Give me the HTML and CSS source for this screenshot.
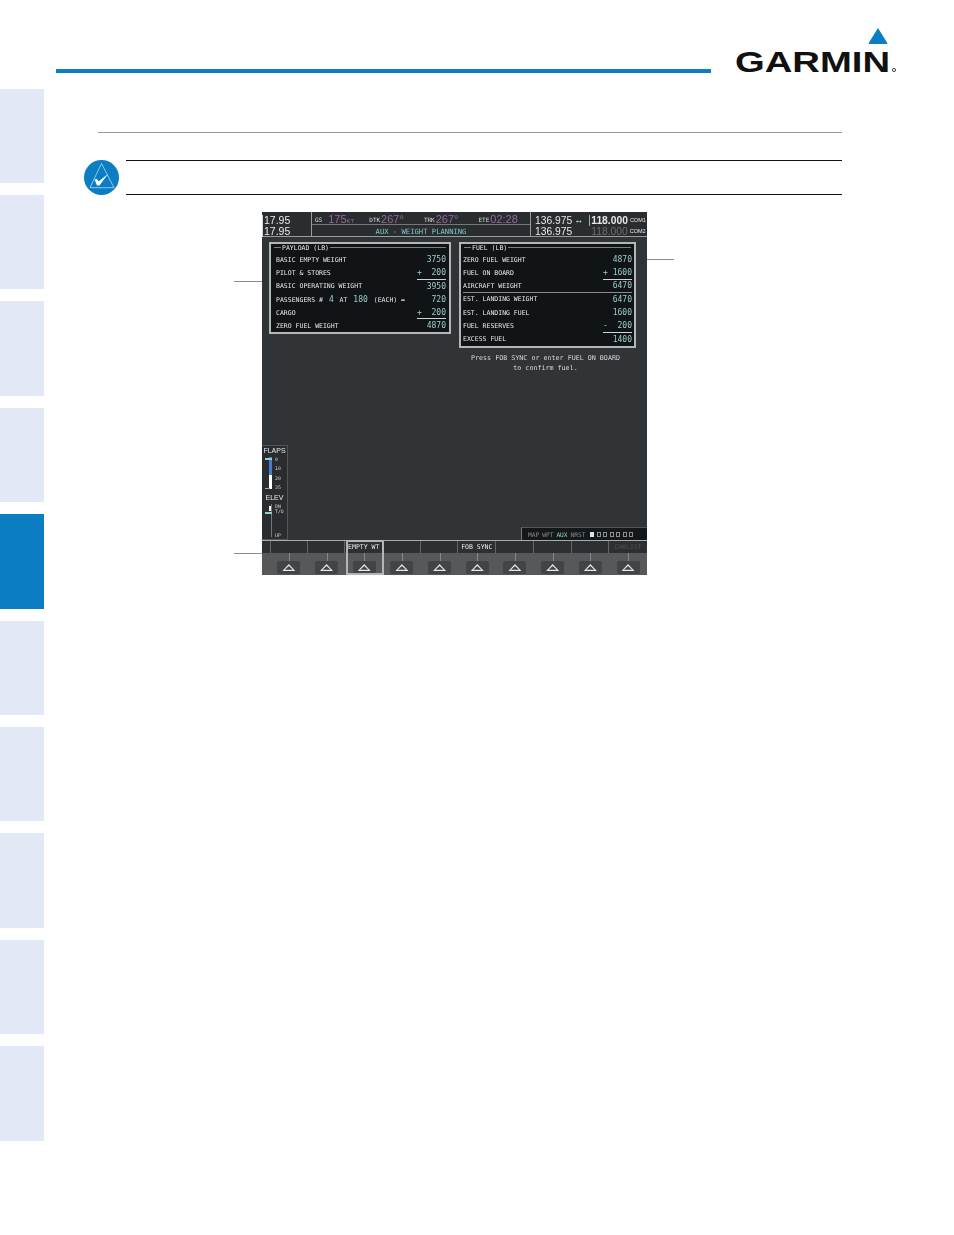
FILE: index.html
```html
<!DOCTYPE html>
<html lang="en">
<head>
<meta charset="utf-8">
<title>AUX - Weight Planning</title>
<link rel="stylesheet" href="styles.css">
</head>
<body>
<div class="page">
  <nav class="tabs">
    <div class="tab"></div><div class="tab"></div><div class="tab"></div><div class="tab"></div>
    <div class="tab active"></div>
    <div class="tab"></div><div class="tab"></div><div class="tab"></div><div class="tab"></div><div class="tab"></div>
  </nav>
  <div class="main">
    <header class="head">
      <div class="head-rule"></div>
      <svg class="logo" width="164" height="50" viewBox="0 0 164 50">
        <path d="M143 1 L134 15.500 Q133 17 135 17 L151 17 Q153 17 152 15.500 Z" fill="#0b7dc2"/>
        <text x="0" y="44.500" font-family="'Liberation Sans',sans-serif" font-weight="700" font-size="30" textLength="155" lengthAdjust="spacingAndGlyphs" fill="#111">GARMIN</text>
        <circle cx="159" cy="43" r="1.600" fill="none" stroke="#444" stroke-width="1"/>
      </svg>
    </header>
    <div class="section-rule"></div>
    <div class="note">
      <svg class="note-icon" width="36" height="36" viewBox="0 0 36 36">
        <circle cx="17.500" cy="17.500" r="17.500" fill="#0b7dc2"/>
        <path d="M17.500 3.500 L6 27.700 L30 27.700 Z" fill="none" stroke="#cfe6f5" stroke-width="0.700"/>
        <path d="M10.500 19.500 L13 19 L14.500 21.500 L24 14 L15.500 25.500 L13 25.500 Z" fill="#fff"/>
      </svg>
      <div class="note-body"></div>
    </div>
    <figure class="figure">
      <div class="leader leader-a"></div>
      <div class="leader leader-b"></div>
      <div class="leader leader-c"></div>
      <div class="screen">
        <div class="topbar">
          <div class="tb-nav"><span>17.95</span><span>17.95</span></div>
          <div class="tb-mid">
            <div class="tb-data">
              <span class="lbl">GS</span><span class="mag gs">175<small>KT</small></span>
              <span class="lbl dtk">DTK</span><span class="mag">267°</span>
              <span class="lbl trk">TRK</span><span class="mag">267°</span>
              <span class="lbl ete">ETE</span><span class="mag">02:28</span>
            </div>
            <div class="tb-title">AUX - WEIGHT PLANNING</div>
          </div>
          <div class="tb-com">
            <div class="com-row"><span>136.975</span><span class="swap">↔</span><span class="com-box">118.000</span><small>COM1</small></div>
            <div class="com-row"><span>136.975</span><span class="com-dim">118.000</span><small>COM2</small></div>
          </div>
        </div>
        <div class="panels">
          <section class="panel payload">
            <h3 class="panel-title">PAYLOAD (LB)</h3>
            <div class="row"><span>BASIC EMPTY WEIGHT</span><b>3750</b></div>
            <div class="row"><span>PILOT &amp; STORES</span><b class="add">+&nbsp;&nbsp;200</b></div>
            <div class="row"><span>BASIC OPERATING WEIGHT</span><b>3950</b></div>
            <div class="row"><span>PASSENGERS # <b>4</b> AT <b>180</b> (EACH) =</span><b>720</b></div>
            <div class="row"><span>CARGO</span><b class="add">+&nbsp;&nbsp;200</b></div>
            <div class="row"><span>ZERO FUEL WEIGHT</span><b>4870</b></div>
          </section>
          <div class="fuel-col">
            <section class="panel fuel">
              <h3 class="panel-title">FUEL (LB)</h3>
              <div class="row"><span>ZERO FUEL WEIGHT</span><b>4870</b></div>
              <div class="row"><span>FUEL ON BOARD</span><b class="add">+&nbsp;1600</b></div>
              <div class="row split"><span>AIRCRAFT WEIGHT</span><b>6470</b></div>
              <div class="row"><span>EST. LANDING WEIGHT</span><b>6470</b></div>
              <div class="row"><span>EST. LANDING FUEL</span><b>1600</b></div>
              <div class="row"><span>FUEL RESERVES</span><b class="add">-&nbsp;&nbsp;200</b></div>
              <div class="row"><span>EXCESS FUEL</span><b>1400</b></div>
            </section>
            <p class="prompt">Press FOB SYNC or enter FUEL ON BOARD<br>to confirm fuel.</p>
          </div>
        </div>
        <div class="lower">
          <div class="gauge">
            <div class="g-title">FLAPS</div>
            <div class="g-scale flaps">
              <div class="g-bar"></div>
              <div class="g-ticks"><span>0</span><span>10</span><span>20</span><span>35</span></div>
            </div>
            <div class="g-title">ELEV</div>
            <div class="g-scale elev">
              <div class="g-track"></div>
              <div class="g-ticks"><span>DN<br>T/O</span><span>UP</span></div>
            </div>
          </div>
          <div class="modes">
            <span>MAP</span><span>WPT</span><span class="on">AUX</span><span>NRST</span>
            <div class="dots"><i class="fill"></i><i></i><i></i><i></i><i></i><i></i><i></i></div>
          </div>
        </div>
        <div class="softkeys">
          <div class="labels">
            <span></span><span></span><span>EMPTY WT</span><span></span><span></span><span>FOB SYNC</span><span></span><span></span><span></span><span class="dim">CHKLIST</span>
          </div>
          <div class="keys">
            <div class="key"><em></em></div><div class="key"><em></em></div><div class="key"><em></em></div><div class="key"><em></em></div><div class="key"><em></em></div>
            <div class="key"><em></em></div><div class="key"><em></em></div><div class="key"><em></em></div><div class="key"><em></em></div><div class="key"><em></em></div>
          </div>
        </div>
        <div class="hilite"></div>
      </div>
    </figure>
  </div>
</div>
</body>
</html>
```

FILE: styles.css
```css
* { box-sizing: border-box; }
html, body { margin: 0; padding: 0; background: #fff; }
body { font-family: "Liberation Sans", Arial, sans-serif; }
.page { display: flex; width: 954px; height: 1235px; overflow: hidden; }

.tabs { width: 44px; flex: none; padding-top: 88.700px; display: flex; flex-direction: column; gap: 12px; }
.tab { height: 94.400px; background: #e2e8f6; }
.tab.active { background: #0b7dc2; }

.main { flex: 1; min-width: 0; }
.head { height: 76px; padding: 27px 0 0 12px; display: flex; align-items: flex-start; position: relative; }
.head-rule { position: absolute; left: 12px; top: 69px; width: 655px; height: 4px; background: #0b7dc2; }
.logo { margin-left: 679px; display: block; }

.section-rule { margin: 56px 112px 0 54px; height: 1px; background: #999; }
.note { margin: 27px 112px 0 40px; display: flex; height: 36px; }
.note-icon { flex: none; display: block; }
.note-body { flex: 1; margin-left: 6px; height: 35px; border-top: 1px solid #111; border-bottom: 1px solid #111; }

.figure { margin: 16px 0 0 218px; width: 385px; position: relative; }
.leader { position: absolute; height: 1px; background: #8d8d8d; }
.leader-a { left: -28px; top: 69px; width: 36px; }
.leader-b { left: -28px; top: 341px; width: 112px; }
.leader-c { left: 373px; top: 47px; width: 39px; }

.screen { width: 385px; height: 363px; background: #303437; color: #e6e8e8; position: relative; overflow: hidden; font-family: "DejaVu Sans Mono", monospace; font-size: 6.500px; filter: blur(0.3px); }

.topbar { height: 25px; display: flex; border-bottom: 1px solid #9a9c9c; background: #2a2d30; font-family: "Liberation Sans", sans-serif; }
.tb-nav { width: 50px; flex: none; border-right: 1px solid #9a9c9c; display: flex; flex-direction: column; font-size: 10.500px; line-height: 11px; padding-top: 3px; color: #e8e8e8; }
.tb-nav span { padding-left: 1px; border-left: 1px solid #cfcfcf; }
.tb-mid { width: 218px; flex: none; display: flex; flex-direction: column; }
.tb-data { height: 13px; border-bottom: 1px solid #777; display: flex; align-items: center; padding: 2px 0 0 3px; white-space: nowrap; }
.lbl { font-size: 6px; color: #dcdcdc; font-family: "DejaVu Sans Mono", monospace; }
.mag { font-size: 11px; color: #96689e; margin-left: 1px; }
.mag small { font-size: 6px; }
.gs { margin-left: 6px; }
.dtk { margin-left: 15px; }
.trk { margin-left: 20px; }
.ete { margin-left: 20px; }
.tb-title { color: #7fc9c0; font-family: "DejaVu Sans Mono", monospace; font-size: 7.200px; line-height: 11px; padding-top: 1px; text-align: center; }
.tb-com { flex: 1; min-width: 0; border-left: 1px solid #9a9c9c; padding: 3px 0 0 4px; font-size: 10.300px; line-height: 11px; color: #e8e8e8; }
.com-row { display: flex; align-items: center; white-space: nowrap; }
.com-row small { font-size: 5.500px; margin-left: 2px; }
.swap { font-size: 9px; color: #cfe; margin-left: 2px; width: 15px; }
.com-box { border-left: 1px solid #aaa; padding-left: 1px; font-weight: 700; }
.com-dim { color: #6b6f70; margin-left: 19px; }

.panels { display: flex; padding: 5px 0 0 7px; gap: 8px; height: 280px; }
.panel { border: 2px solid #b3b6b6; background: #101417; padding: 9px 3px 0 5px; position: relative; }
.panel::before { content: ""; position: absolute; left: 3px; right: 3px; top: 3px; height: 1px; background: #7d8080; }
.panel-title { position: absolute; left: 10px; top: 0; margin: 0; font-size: 6.500px; font-weight: 400; line-height: 9px; background: #101417; padding: 0 1px; color: #e6e8e8; }
.payload { width: 182px; height: 92px; flex: none; }
.fuel { width: 177px; height: 106px; padding-left: 2px; padding-right: 2px; }
.row { height: 13.280px; display: flex; justify-content: space-between; align-items: center; white-space: nowrap; color: #e6e8e8; }
.row b { font-weight: 400; font-size: 8px; color: #9ccdc6; }
.row span b { font-size: 8px; margin: 0 2px; }
.row .add { border-bottom: 1px solid #d0d4d4; align-self: stretch; min-width: 28px; line-height: 13px; text-align: right; }
.split { border-bottom: 1px solid #8a8c8c; }
.fuel-col { display: flex; flex-direction: column; }
.prompt { margin: 5px 4px 0 0; text-align: center; font-size: 6.700px; line-height: 10px; color: #d8dada; }

.lower { height: 13px; display: flex; justify-content: flex-end; align-items: flex-end; position: relative; margin-top: 10px; }
.gauge { position: absolute; left: 0; bottom: 0; width: 26px; height: 95px; border: 1px solid #555; border-left: 0; padding-top: 1px; background: #2a2d30; overflow: hidden; }
.g-title { font-family: "Liberation Sans", sans-serif; font-size: 7px; line-height: 8px; text-align: center; color: #e6e8e8; }
.g-scale { display: flex; gap: 3px; position: relative; }
.flaps { height: 36px; margin-bottom: 3px; padding-left: 7px; }
.g-bar { width: 3px; height: 32px; margin-top: 2px; background: linear-gradient(#4a7ad0 0 56%, #fff 56%); }
.flaps::before { content: ""; position: absolute; left: 3px; top: 3px; width: 7px; height: 2px; background: #8fd3c8; }
.flaps::after { content: ""; position: absolute; left: 3px; top: 33px; width: 5px; height: 1px; background: #aaa; }
.g-ticks { display: flex; flex-direction: column; justify-content: space-between; font-size: 4.800px; line-height: 7px; color: #cfd2d2; padding-top: 1px; }
.elev { height: 38px; padding-left: 7px; }
.elev .g-ticks { padding: 2px 0 2px; line-height: 5px; }
.g-track { width: 3px; height: 33px; margin-top: 2px; border-right: 1px solid #777; background: linear-gradient(#fff, #fff) 0 2px / 3px 5px no-repeat; }
.elev::before { content: ""; position: absolute; left: 3px; top: 10px; width: 7px; height: 2px; background: #8fd3c8; }
.modes { width: 126px; height: 13px; background: #14181b; display: flex; align-items: center; gap: 3px; padding-left: 6px; font-size: 6.200px; color: #8a8e8e; border-left: 1px solid #777; border-top: 1px solid #555; }
.modes .on { color: #8fd3c8; }
.dots { display: flex; gap: 2.500px; margin-left: 2px; }
.dots i { width: 4px; height: 5px; border: 1px solid #8a8e8e; }
.dots .fill { background: #cfe8f0; border-color: #cfe8f0; }

.softkeys { height: 35px; position: relative; }
.labels { height: 13px; display: grid; grid-template-columns: repeat(10, 37.700px); padding-left: 8px; background: #2c3033; border-top: 1px solid #aaa; font-size: 6.500px; line-height: 12px; }
.labels span { border-right: 1px solid #666; text-align: center; color: #e6e8e8; }
.labels span:first-child { border-left: 1px solid #666; }
.labels .dim { color: #4c5052; border-right: 0; }
.keys { height: 22px; display: grid; grid-template-columns: repeat(10, 37.700px); padding-left: 8px; background: #565859; }
.key { position: relative; display: flex; justify-content: center; align-items: flex-end; padding-bottom: 1px; }
.key::before { content: ""; position: absolute; left: 50%; top: 0; width: 1px; height: 8px; background: #888; }
.key em { width: 23px; height: 13px; border-radius: 2px; background: #424547; position: relative; display: block; }
.key em::before { content: ""; position: absolute; left: 5px; top: 3px; width: 13px; height: 7px; background: #e8e8e8; clip-path: polygon(50% 0, 100% 100%, 0 100%); }
.key em::after { content: ""; position: absolute; left: 7.500px; top: 5px; width: 8px; height: 3.800px; background: #424547; clip-path: polygon(50% 0, 100% 100%, 0 100%); }
.hilite { position: absolute; left: 84px; top: 328px; width: 38px; height: 35px; border: 2px solid #b3b6b6; }
```
